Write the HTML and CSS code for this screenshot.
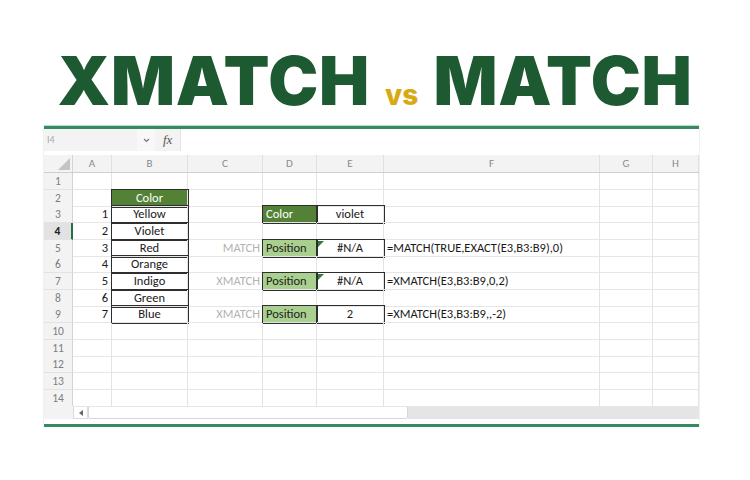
FILE: index.html
```html
<!DOCTYPE html>
<html lang="en">
<head>
  <meta charset="UTF-8">
  <meta name="viewport" content="width=device-width, initial-scale=1.0">
  <title>XMATCH vs MATCH</title>
  <link rel="stylesheet" href="styles.css">
</head>
<body>
  <h1 class="title"><span class="big">XMATCH</span><span class="vs">vs</span><span class="big">MATCH</span></h1>

  <div class="sheet">
    <!-- formula bar -->
    <div class="fbar">
      <div class="namebox">I4</div>
      <div class="drop"><svg width="7" height="5" viewBox="0 0 7 5"><polyline points="1,1 3.5,3.5 6,1" fill="none" stroke="#777" stroke-width="1.2"/></svg></div>
      <div class="fx">fx</div>
      <div class="finput"></div>
    </div>

    <div class="grid">
      <div class="row colhead">
        <div class="corner"><svg width="12" height="12" viewBox="0 0 12 12"><polygon points="12,0 12,12 0,12" fill="#c4c4c4"/></svg></div>
        <div>A</div><div>B</div><div>C</div><div>D</div><div>E</div><div>F</div><div>G</div><div>H</div>
      </div>
      <div class="row"><div class="rh">1</div><div class="c"></div><div class="c"></div><div class="c"></div><div class="c"></div><div class="c"></div><div class="c"></div><div class="c"></div><div class="c"></div></div>
      <div class="row"><div class="rh">2</div><div class="c"></div><div class="c ctr dark bx">Color</div><div class="c"></div><div class="c"></div><div class="c"></div><div class="c"></div><div class="c"></div><div class="c"></div></div>
      <div class="row"><div class="rh">3</div><div class="c r">1</div><div class="c ctr bx">Yellow</div><div class="c"></div><div class="c dark bx">Color</div><div class="c ctr bx">violet</div><div class="c"></div><div class="c"></div><div class="c"></div></div>
      <div class="row"><div class="rh sel">4</div><div class="c r">2</div><div class="c ctr bx">Violet</div><div class="c"></div><div class="c"></div><div class="c"></div><div class="c"></div><div class="c"></div><div class="c"></div></div>
      <div class="row"><div class="rh">5</div><div class="c r">3</div><div class="c ctr bx">Red</div><div class="c r lbl">MATCH</div><div class="c pos bx">Position</div><div class="c ctr bx err">#N/A</div><div class="c">=MATCH(TRUE,EXACT(E3,B3:B9),0)</div><div class="c"></div><div class="c"></div></div>
      <div class="row"><div class="rh">6</div><div class="c r">4</div><div class="c ctr bx">Orange</div><div class="c"></div><div class="c"></div><div class="c"></div><div class="c"></div><div class="c"></div><div class="c"></div></div>
      <div class="row"><div class="rh">7</div><div class="c r">5</div><div class="c ctr bx">Indigo</div><div class="c r lbl">XMATCH</div><div class="c pos bx">Position</div><div class="c ctr bx err">#N/A</div><div class="c">=XMATCH(E3,B3:B9,0,2)</div><div class="c"></div><div class="c"></div></div>
      <div class="row"><div class="rh">8</div><div class="c r">6</div><div class="c ctr bx">Green</div><div class="c"></div><div class="c"></div><div class="c"></div><div class="c"></div><div class="c"></div><div class="c"></div></div>
      <div class="row"><div class="rh">9</div><div class="c r">7</div><div class="c ctr bx">Blue</div><div class="c r lbl">XMATCH</div><div class="c pos bx">Position</div><div class="c ctr bx">2</div><div class="c">=XMATCH(E3,B3:B9,,-2)</div><div class="c"></div><div class="c"></div></div>
      <div class="row"><div class="rh">10</div><div class="c"></div><div class="c"></div><div class="c"></div><div class="c"></div><div class="c"></div><div class="c"></div><div class="c"></div><div class="c"></div></div>
      <div class="row"><div class="rh">11</div><div class="c"></div><div class="c"></div><div class="c"></div><div class="c"></div><div class="c"></div><div class="c"></div><div class="c"></div><div class="c"></div></div>
      <div class="row"><div class="rh">12</div><div class="c"></div><div class="c"></div><div class="c"></div><div class="c"></div><div class="c"></div><div class="c"></div><div class="c"></div><div class="c"></div></div>
      <div class="row"><div class="rh">13</div><div class="c"></div><div class="c"></div><div class="c"></div><div class="c"></div><div class="c"></div><div class="c"></div><div class="c"></div><div class="c"></div></div>
      <div class="row"><div class="rh">14</div><div class="c"></div><div class="c"></div><div class="c"></div><div class="c"></div><div class="c"></div><div class="c"></div><div class="c"></div><div class="c"></div></div>
    </div>

    <!-- horizontal scrollbar -->
    <div class="hscroll">
      <div class="hs-pad"></div>
      <div class="hs-btn"><svg width="4" height="6" viewBox="0 0 4 6"><polygon points="4,0 4,6 0,3" fill="#666"/></svg></div>
      <div class="hs-thumb"></div>
      <div class="hs-track"></div>
    </div>
  </div>
</body>
</html>
```

FILE: styles.css
```css
/* Basic Reset */
* {
  margin: 0;
  padding: 0;
  box-sizing: border-box;
}
body {
  background: #fff;
  font-family: "Carlito", "Lato", "Open Sans", sans-serif;
  color: #1a1a1a;
}

/* Title */
.title {
  display: flex;
  justify-content: center;
  align-items: baseline;
  gap: 15px;
  padding-top: 48px;
  height: 126px;
  font-family: "Inter", "Liberation Sans", sans-serif;
  line-height: 66px;
}
.title .big {
  font-size: 67px;
  font-weight: 900;
  letter-spacing: 0.8px;
  color: #1d5a31;
}
.title .vs {
  font-size: 28px;
  font-weight: 800;
  color: #d9a912;
}

/* Sheet frame */
.sheet {
  width: 655px;
  margin-left: 44px;
  border-top: 3px solid #368a5f;
  border-bottom: 3px solid #368a5f;
  padding-bottom: 5px;
  box-shadow: 0 -1px 1px #b9e2cc, 0 1px 1px #b9e2cc;
}
.fbar {
  display: flex;
  height: 22px;
  margin-bottom: 4px;
  background: #f3f3f3;
}
.namebox {
  width: 93px;
  padding: 4px 0 0 3px;
  font-size: 10px;
  color: #aaa;
}
.drop {
  width: 18px;
  display: flex;
  align-items: center;
  justify-content: center;
  background: #f8f8f8;
}
.fx {
  width: 25px;
  padding: 3px 0 0 8px;
  font-family: "Liberation Serif", serif;
  font-style: italic;
  font-size: 13px;
  color: #555;
}
.finput {
  flex: 1;
  background: #fff;
  border-left: 1px solid #e4e4e4;
}

/* Grid */
.row {
  display: grid;
  grid-template-columns: 29px 39px 76px 75px 54px 67px 216px 53px 46px;
  height: 16.67px;
  font-size: 12.5px;
  line-height: 16px;
}
.colhead {
  height: 18px;
  background: #f3f3f3;
  border-bottom: 1px solid #cfcfcf;
}
.colhead div {
  display: flex;
  align-items: center;
  justify-content: center;
  color: #8a8a8a;
  font-size: 11px;
  border-right: 1px solid #e0e0e0;
}
.colhead .corner {
  justify-content: flex-end;
  align-items: flex-end;
  padding: 0 2px 2px 0;
  border-right: 1px solid #d4d4d4;
}
.rh {
  display: flex;
  align-items: center;
  justify-content: center;
  background: #f3f3f3;
  color: #7d7d7d;
  font-size: 11.5px;
  border-right: 1px solid #d4d4d4;
  border-bottom: 1px solid #e3e3e3;
}
.rh.sel {
  background: #e2e2e2;
  color: #222;
  font-weight: bold;
  border-right: 2px solid #217346;
}
.c {
  position: relative;
  display: flex;
  align-items: center;
  padding: 0 3px;
  white-space: nowrap;
  border-right: 1px solid #e3e3e3;
  border-bottom: 1px solid #e6e6e6;
}
.r {
  justify-content: flex-end;
}
.ctr {
  justify-content: center;
}
.lbl {
  color: #b3b3b3;
  padding-right: 2px;
}
.dark {
  background: #538135;
  color: #fff;
}
.pos {
  background: #a9d08e;
  color: #1f1f1f;
}
.bx {
  outline: 1.5px solid #2e2e2e;
  outline-offset: -0.75px;
}
.err::before {
  content: "";
  position: absolute;
  top: 1px;
  left: 1px;
  border-top: 6px solid #2f7a3c;
  border-right: 6px solid transparent;
}

/* Horizontal scrollbar */
.hscroll {
  display: flex;
  height: 13px;
}
.hs-pad {
  width: 29px;
  background: #f3f3f3;
}
.hs-btn {
  width: 15px;
  display: flex;
  align-items: center;
  justify-content: center;
  border: 1px solid #dcdcdc;
  background: #fff;
}
.hs-thumb {
  width: 320px;
  background: #fff;
  border: 1px solid #d6d6d6;
  border-radius: 2px;
}
.hs-track {
  flex: 1;
  background: #e5e5e5;
}
```
